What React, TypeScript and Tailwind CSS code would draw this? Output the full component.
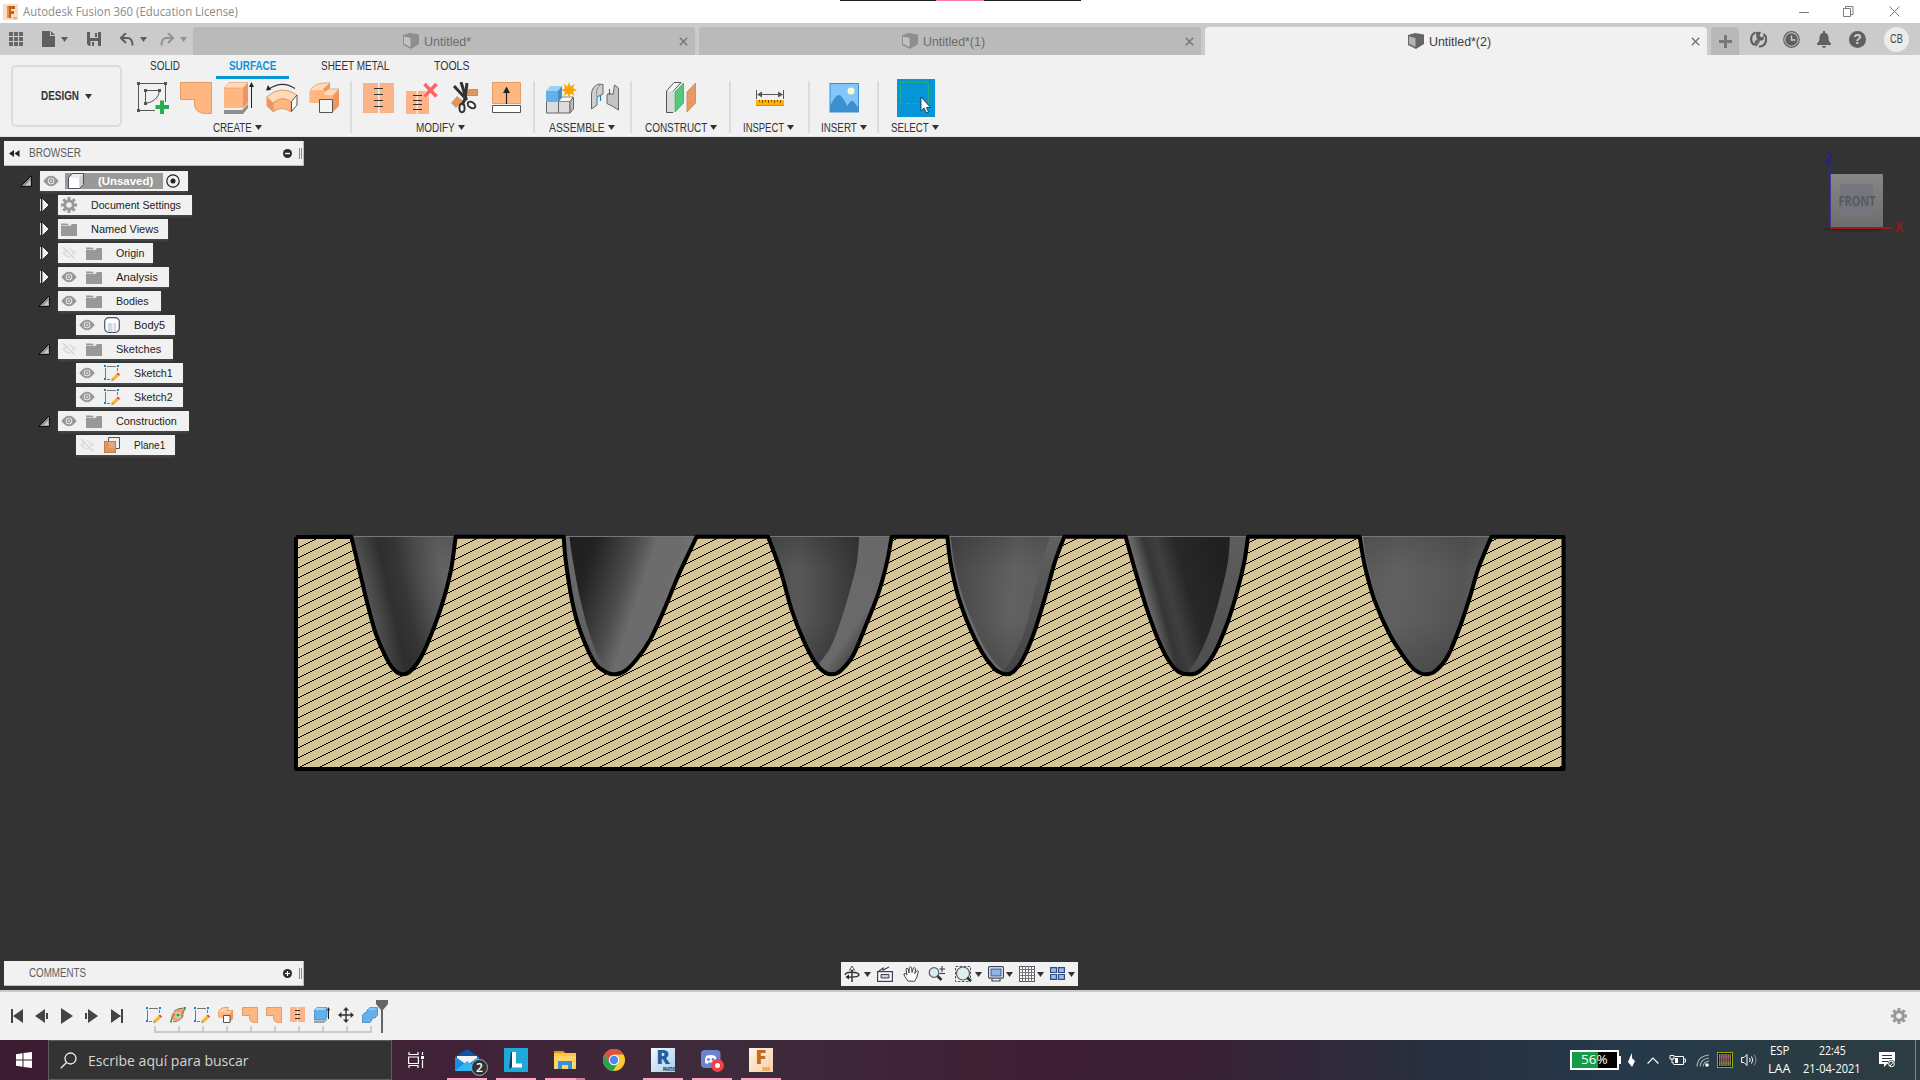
import React, { useLayoutEffect, useRef, useState } from 'react';

type Kids = { children?: React.ReactNode };

/* Single-line text condensed or widened so that it fills the given width. */
function Fit({ w, text, className = '' }: { w: number; text: string; className?: string }) {
  const ref = useRef<HTMLSpanElement>(null);
  const [scale, setScale] = useState(1);
  useLayoutEffect(() => {
    if (ref.current) setScale(w / ref.current.offsetWidth);
  }, [w, text]);
  return (
    <span className={'block shrink-0 ' + className} style={{ width: w }}>
      <span ref={ref} className="inline-block origin-left whitespace-pre" style={{ transform: `scaleX(${scale})` }}>
        {text}
      </span>
    </span>
  );
}

function Svg({ w, h, className = '', children }: { w: number; h: number; className?: string } & Kids) {
  return (
    <svg width={w} height={h} viewBox={`0 0 ${w} ${h}`} fill="none" className={'block shrink-0 ' + className}>
      {children}
    </svg>
  );
}

const Caret = ({ className = '' }: { className?: string }) => (
  <Svg w={7} h={5} className={className}>
    <path d="M0 0H7L3.5 5Z" fill="currentColor" />
  </Svg>
);

/* ---------- title bar ---------- */

function TitleBar() {
  return (
    <div className="relative flex h-[23px] items-center bg-white">
      <Svg w={15} h={16} className="ml-[3px]">
        <rect width="15" height="16" fill="#fbdcc0" />
        <path d="M4 2H12V5H8V7H11V10H8V14H4Z" fill="#b9661c" />
        <path d="M4 2L6 3V14H4Z" fill="#e8964a" />
        <path d="M9 13h5v2h-3z" fill="#f0b27c" />
      </Svg>
      <Fit w={215} text="Autodesk Fusion 360 (Education License)" className="ml-[5px] font-['Open_Sans',sans-serif] text-[12px] text-[#8a8a8a]" />
      <div className="absolute left-[840px] top-0 flex h-px w-[241px] bg-[#1d1d1d]">
        <div className="ml-24 h-px w-12 bg-[#ff7fa5]" />
      </div>
      <div className="ml-auto flex items-center text-[#7d7d7d]">
        <Svg w={10} h={10}><path d="M0 5.5H10" stroke="currentColor" /></Svg>
        <Svg w={11} h={11} className="ml-[34px]"><path d="M.5 2.5H7.5V10.5H.5ZM2.5 2.5V.5H10V8.5H7.5" stroke="currentColor" /></Svg>
        <Svg w={11} h={11} className="ml-[35px] mr-5"><path d="M.5 .5L10.500 10.500M10.500 .5L.5 10.500" stroke="currentColor" /></Svg>
      </div>
    </div>
  );
}

/* ---------- document tab bar ---------- */

const DocCube = ({ dim }: { dim?: boolean }) => (
  <Svg w={16} h={16}>
    <path d="M0 2L7 0L16 1.500V11L8 16L0 12Z" fill={dim ? '#8e8e8e' : '#666'} />
    <path d="M1 3.500L7.500 5V14L1 10.800Z" fill={dim ? '#c2c2c2' : '#b4b4b4'} />
  </Svg>
);

function DocTab({ title, w, active, className }: { title: string; w: number; active?: boolean; className: string }) {
  return (
    <div className={'flex h-7 items-center rounded-t-[4px] ' + (active ? 'bg-[#f1f1f1] text-[#3c3c3c] ' : 'bg-[#bababa] text-[#6c6c6c] ') + className}>
      <DocCube dim={!active} />
      <Fit w={w} text={title} className="ml-[5px] mt-[1px] font-['Liberation_Sans',sans-serif] text-[13px]" />
      <Svg w={9} h={9} className="ml-auto mr-[7px]">
        <path d="M.8 .8L8.200 8.200M8.200 .8L.8 8.200" stroke="#777" strokeWidth="1.500" />
      </Svg>
    </div>
  );
}

function TabBar() {
  return (
    <div className="flex h-8 items-end bg-[#cbcbcb] text-[#5f5f5f]">
      <div className="flex h-8 w-[193px] shrink-0 items-center pl-[9px]">
        <Svg w={14} h={14}>
          {[0, 5, 10].map((x) => [0, 5, 10].map((y) => <rect key={x + '-' + y} x={x} y={y} width="4" height="4" fill="#666" />))}
        </Svg>
        <Svg w={13} h={16} className="ml-[19px]"><path d="M0 0H8V5H13V16H0ZM9 0L13 4H9Z" fill="#5f5f5f" /></Svg>
        <Caret className="ml-[6px]" />
        <Svg w={14} h={14} className="ml-[19px]">
          <path d="M0 0H14V14H2L0 12Z" fill="#5f5f5f" />
          <path d="M3 0H11V6H3ZM3.500 9H11V14H3.500Z" fill="#cbcbcb" />
          <path d="M8 1h2v4H8zM5 10h2v4H5z" fill="#5f5f5f" />
        </Svg>
        <Svg w={14} h={13} className="ml-[19px]">
          <path d="M1.500 5H8Q12.500 5.500 12.500 12.500" stroke="#5f5f5f" strokeWidth="2" />
          <path d="M6 0L1 5L6 10" stroke="#5f5f5f" strokeWidth="2" />
        </Svg>
        <Caret className="ml-[6px]" />
        <Svg w={14} h={13} className="ml-[13px]">
          <path d="M12.500 5H6Q1.500 5.500 1.500 12.500" stroke="#929292" strokeWidth="2" />
          <path d="M8 0L13 5L8 10" stroke="#929292" strokeWidth="2" />
        </Svg>
        <Caret className="ml-[6px] text-[#929292]" />
      </div>
      <DocTab title="Untitled*" w={47} className="w-[502px] pl-[210px]" />
      <DocTab title="Untitled*(1)" w={62} className="ml-1 w-[502px] pl-[203px]" />
      <DocTab title="Untitled*(2)" w={62} active className="ml-1 w-[502px] pl-[203px]" />
      <div className="ml-1 flex h-7 w-7 items-center justify-center rounded-t-[4px] bg-[#b8b8b8]">
        <Svg w={13} h={13}><path d="M6.500 0V13M0 6.500H13" stroke="#777" strokeWidth="3" /></Svg>
      </div>
      <div className="flex h-8 items-center">
        <Svg w={17} h={17} className="ml-[11px]">
          <path d="M5.500 1.500A7 7 0 0 0 4.500 14M13.500 3A7 7 0 0 1 9 15.500" stroke="#5f5f5f" strokeWidth="2.200" />
          <path d="M5 10L7 8L10 10.500L6.500 15.500L4 14Z" fill="#5f5f5f" opacity=".9" />
          <path d="M6 1L11 .8L9.500 5L12 6.500L14 4.500L13.500 9L9 10L6.500 7Z" fill="#5f5f5f" />
        </Svg>
        <Svg w={17} h={17} className="ml-[16px]">
          <circle cx="8.500" cy="8.500" r="7.800" stroke="#5f5f5f" strokeWidth="1.200" />
          <circle cx="8.500" cy="8.500" r="6.200" fill="#5f5f5f" />
          <path d="M8.500 4.500V9H12.500" stroke="#ccc" strokeWidth="1.400" />
        </Svg>
        <Svg w={16} h={17} className="ml-[16px]">
          <path d="M7 0H9V1.800Q12.500 2.800 12.500 7Q12.500 11 15 12.500V14H1V12.500Q3.500 11 3.500 7Q3.500 2.800 7 1.800ZM6 15H10Q9.500 17 8 17Q6.500 17 6 15Z" fill="#5f5f5f" />
        </Svg>
        <div className="ml-[17px] flex h-[17px] w-[17px] items-center justify-center rounded-full bg-[#5f5f5f] font-['Liberation_Sans',sans-serif] text-[14px] font-bold leading-none text-[#d0d0d0]">?</div>
        <div className="ml-[18px] flex h-[25px] w-[25px] items-center justify-center rounded-full bg-[#ececec]">
          <Fit w={13} text="CB" className="font-['Liberation_Sans',sans-serif] text-[12px] text-[#444]" />
        </div>
      </div>
    </div>
  );
}

/* ---------- ribbon icons, each on a 32px grid ---------- */

const O = '#ffb681';
const OS = '#e39c67';

const Ico = ({ children }: Kids) => <Svg w={32} h={32}>{children}</Svg>;

const SketchIcon = () => (
  <Ico>
    <path d="M2 1.500H28M1.500 2V28M28.500 2V20M2 28.500H18" stroke="#555" />
    <path d="M0 0h3v3H0zM27 0h3v3h-3zM0 27h3v3H0zM7 7h3v3H7zM21 7h3v3h-3zM7 20h3v3H7z" fill="#555" />
    <path d="M8.500 9V20M9 8.500H22M22.500 9Q21 19 9 21.500" stroke="#555" />
    <path d="M23 18.500H27V23H32V27H27V32H23V27H18.500V23H23Z" fill="#24b04c" />
  </Ico>
);
const PatchIcon = () => (
  <Ico><path d="M.5 .5H31.500V31.500H25Q15.500 31 14.500 23V17.500H.5Z" fill={O} stroke={OS} /></Ico>
);
const ExtrudeIcon = () => (
  <Ico>
    <path d="M1 28L19 28L25 22V26L20 32H1Z" fill="#8e8e8e" />
    <path d="M1 6H20V26H1Z" fill={O} />
    <path d="M1 6L6 .5H25L20 6Z" fill="#ffd9b8" stroke={OS} strokeWidth=".6" />
    <path d="M20 6L25 .5V21L20 26Z" fill="#ef9560" />
    <path d="M28.500 3V26" stroke="#222" /><path d="M26 5L28.500 0L31 5Z" fill="#222" />
  </Ico>
);
const RevolveIcon = () => (
  <Ico>
    <path d="M3 7Q16 -2 29 6.500" stroke="#333" strokeWidth="1.200" /><path d="M0 8.500L2 3L5 8Z" fill="#222" />
    <path d="M.5 15Q15 2 31 13L25 20Q17 13 7 21Z" fill="#ffd9b8" stroke={OS} />
    <path d="M.5 15L7 21V30L.5 24Z" fill="#ef9560" />
    <path d="M7 21Q17 13 25 20V30Q16 23 7 30Z" fill={O} stroke={OS} />
    <path d="M31 13L25.500 19.500V29.500L31 23Z" fill="#fff" stroke="#555" />
  </Ico>
);
const OffsetIcon = () => (
  <Ico>
    <path d="M1 10Q3 2 14 1H21L17 7H22L30 7L24 14H10Q1 14 1 20Z" fill="#ffd9b8" stroke={OS} strokeWidth=".8" />
    <path d="M21 1V6L16 10L14 7Z" fill="#ef9560" />
    <path d="M1 10Q3 8 8 8H15Q14 14 22 14H24V22H10V21H1Z" fill={O} />
    <path d="M24 14L30 7V24L24 30Z" fill="#ef9560" />
    <path d="M10.500 17.500H23.500V30.500H10.500Z" fill="#f4f4f4" stroke="#555" />
  </Ico>
);
const StitchIcon = () => (
  <Ico>
    <path d="M0 1H15V31H0ZM16.500 1H31V31H16.500Z" fill="#fab487" />
    <path d="M11 6.500H20M11 12.500H20M11 18.500H20M11 24.500H20" stroke="#333" />
  </Ico>
);
const UnstitchIcon = () => (
  <Ico>
    <path d="M0 9H10.500V32H0ZM12 9H23V32H12Z" fill="#fab487" />
    <path d="M7 13.500H16M7 18.500H16M7 22.500H16M7 27.500H16" stroke="#333" />
    <path d="M19 3L30 14M30 3L19 14" stroke="#f1f1f1" strokeWidth="5" />
    <path d="M18.500 2L30.500 14.500M30.500 2L18.500 14.500" stroke="#ff6464" strokeWidth="3.600" />
  </Ico>
);
const TrimIcon = () => (
  <Ico>
    <path d="M19.500 7.500H28.500V13.500H17Z" fill="#e0965f" stroke="#c77c46" strokeWidth=".8" />
    <path d="M2 21L8 14L14 19L7 26Z" fill="#e0965f" />
    <path d="M12 0L17 16M5 4L18 18" stroke="#333" strokeWidth="3" />
    <path d="M18 1L16 17L13 23" stroke="#333" strokeWidth="3" />
    <ellipse cx="13" cy="26" rx="2.600" ry="4.200" stroke="#333" strokeWidth="2" />
    <ellipse cx="22.500" cy="23" rx="4.200" ry="2.800" transform="rotate(35 22.500 23)" stroke="#333" strokeWidth="2" />
  </Ico>
);
const ExtendIcon = () => (
  <Ico>
    <path d="M.5 .5H28.500V21.500H.5Z" fill={O} stroke={OS} />
    <path d="M.5 23.500H28.500V30.500H.5Z" fill="#fff" stroke="#555" />
    <path d="M14.500 9V22" stroke="#222" strokeWidth="1.200" /><path d="M11 11L14.500 4.500L18 11Z" fill="#222" />
  </Ico>
);
const ComponentIcon = () => (
  <Ico>
    <path d="M1.500 19.500H13.500V31H1.500ZM13.500 19.500H25V31H13.500Z" fill="#dcdcdc" stroke="#666" />
    <path d="M13.500 19.500L17 15H28.500L25 19.500Z" fill="#f8f8f8" stroke="#888" /><path d="M25 19.500L28.500 15V27L25 31Z" fill="#bdbdbd" stroke="#666" />
    <path d="M1 9H13V20H1Z" fill="#66b0ea" /><path d="M1 9L5 4H17L13 9Z" fill="#9bd0f7" /><path d="M13 9L17 4V15L13 20Z" fill="#3d8fd0" />
    <path d="M24 0L25.500 4.500L29.500 2L28 6.300L32 8L28 9.700L29.500 14L25.500 11.500L24 16L22.500 11.500L18.500 14L20 9.700L16 8L20 6.300L18.500 2L22.500 4.500Z" fill="#f7a500" />
  </Ico>
);
const JointIcon = () => (
  <Ico>
    <path d="M3.500 27V12Q4 4 11 2L15 2.500V12L9 15V23Z" fill="#cfcfcf" stroke="#666" />
    <path d="M9 15Q7 8 12 3" stroke="#888" />
    <path d="M30.500 6V28L24 24L19 21.500V12.500Q21 10.500 25 12.500L26.500 3Z" fill="#c4c4c4" stroke="#666" />
    <path d="M12.500 13V19M21.500 7V13" stroke="#0a84d8" strokeWidth="1.200" />
  </Ico>
);
const ConstructIcon = () => (
  <Ico>
    <path d="M1.500 9V30.500H8V9.500L16 .5H9Z" fill="#f6f6f6" stroke="#555" />
    <path d="M2 9.500H9V30H2Z" fill="#d9d9d9" />
    <path d="M10 10L18.500 1V21L10 30Z" fill="#58c67c" stroke="#3aa65e" strokeWidth=".8" />
    <path d="M22 10L30.500 1V21L22 30Z" fill="#e89a64" stroke="#cc8350" strokeWidth=".8" />
  </Ico>
);
const InspectIcon = () => (
  <Ico>
    <path d="M2.500 8V17M29.500 8V17M5 12.500H27" stroke="#555" />
    <path d="M3 12.500L8 9.500V15.500ZM29 12.500L24 9.500V15.500Z" fill="#555" />
    <rect x="2" y="18" width="28" height="6" fill="#ffb000" /><path d="M2 23.500H30" stroke="#e08e00" />
    <path d="M5.500 18v2M8.500 18v3M11.500 18v2M14.500 18v3M17.500 18v2M20.500 18v3M23.500 18v2M26.500 18v3" stroke="#7a5200" />
  </Ico>
);
const InsertIcon = () => (
  <Ico>
    <rect x="2" y="1.500" width="28.500" height="28.500" fill="#82c6fa" />
    <circle cx="23" cy="9" r="3.500" fill="#fff9cf" />
    <path d="M2 24Q8 12 11 13Q15 14 19 24L22 20Q24 18 26 20L30.500 26V30H2Z" fill="#3d90cf" />
    <rect x="2" y="1.500" width="28.500" height="28.500" stroke="#3d90cf" />
  </Ico>
);

function Group({ label, w, className, labelClass = 'pr-[2px]', last, children }: { label: string; w: number; className: string; labelClass?: string; last?: boolean } & Kids) {
  return (
    <div className={'flex h-[52px] flex-col items-center ' + (last ? '' : 'border-r-2 border-[#dcdcdc] ') + className}>
      <div className="flex h-8 gap-[11px] pt-px">{children}</div>
      <div className={'mt-[6px] flex h-[16px] items-center text-[#333] ' + labelClass}>
        <Fit w={w} text={label} className="mt-px text-[12px]" />
        <Caret className="ml-[3px]" />
      </div>
    </div>
  );
}

function Ribbon() {
  return (
    <div className="flex h-[82px] border-b border-[#dfe3e3] bg-[#f1f1f1] font-['Liberation_Sans',sans-serif]">
      <div className="ml-[11px] mt-[10px] flex h-[62px] w-[111px] items-center justify-center rounded-[5px] border-2 border-[#dcdcdc] text-[#333]">
        <Fit w={38} text="DESIGN" className="text-[12px] font-bold" />
        <Caret className="ml-[6px]" />
      </div>
      <div className="ml-[5px] flex flex-col">
        <div className="flex h-6 items-start pt-[2px] text-[12px] text-[#333]">
          <Fit w={30} text="SOLID" className="ml-[23px]" />
          <div className="ml-9 flex h-[22px] w-[73px] flex-col items-center border-b-[3px] border-[#0696d7]">
            <Fit w={47} text="SURFACE" className="font-bold text-[#0696d7]" />
          </div>
          <Fit w={68} text="SHEET METAL" className="ml-8" />
          <Fit w={35} text="TOOLS" className="ml-[45px]" />
        </div>
        <div className="mt-[2px] flex">
          <Group label="CREATE" w={39} className="w-[225px]"><SketchIcon /><PatchIcon /><ExtrudeIcon /><RevolveIcon /><OffsetIcon /></Group>
          <Group label="MODIFY" w={39} className="w-[183px] pl-[2px]" labelClass="pr-[6px]"><StitchIcon /><UnstitchIcon /><TrimIcon /><ExtendIcon /></Group>
          <Group label="ASSEMBLE" w={56} className="w-[97px]"><ComponentIcon /><JointIcon /></Group>
          <Group label="CONSTRUCT" w={62} className="w-[99px]" labelClass=""><ConstructIcon /></Group>
          <Group label="INSPECT" w={41} className="w-[79px]"><InspectIcon /></Group>
          <Group label="INSERT" w={36} className="w-[69px]" labelClass="pl-[1px]"><InsertIcon /></Group>
          <Group label="SELECT" w={38} className="w-[76px] pr-[2px]" last>
            <Svg w={38} h={38} className="-mt-[3px]">
              <rect width="38" height="38" fill="#0696d7" />
              <rect x="3.500" y="3.500" width="28" height="21" stroke="#2fb457" strokeDasharray="5 2.500" />
              <path d="M24 18V32L27 29L29.500 34L31.500 33L29.500 28.500H33.500Z" fill="#fff" stroke="#222" strokeWidth=".8" />
            </Svg>
          </Group>
        </div>
      </div>
    </div>
  );
}

/* ---------- browser tree ---------- */

const Eye = ({ off }: { off?: boolean }) => (
  <Svg w={16} h={16}>
    {off ? (
      <>
        <path d="M1 8Q8 -1 15 8Q8 17 1 8Z" fill="#dedede" /><circle cx="8" cy="8" r="3" fill="#f1f1f1" />
        <path d="M3 1L14 14" stroke="#f1f1f1" strokeWidth="3" /><path d="M2 2L14 14" stroke="#d4d4d4" strokeWidth="1.200" />
      </>
    ) : (
      <>
        <path d="M.3 8Q8 -2.500 15.700 8Q8 18.500 .3 8Z" fill="#999" /><circle cx="8" cy="8" r="3.200" fill="#f1f1f1" />
        <circle cx="8" cy="8" r="2.400" fill="#999" /><circle cx="8" cy="8" r=".9" fill="#e8e8e8" />
      </>
    )}
  </Svg>
);
const Gear = () => (
  <Svg w={16} h={16}>
    <g stroke="#999" strokeWidth="3"><path d="M8 0V4M8 12V16M0 8H4M12 8H16" /><path d="M2.300 2.300L5 5M11 11L13.700 13.700M2.300 13.700L5 11M11 5L13.700 2.300" /></g>
    <circle cx="8" cy="8" r="4.300" stroke="#999" strokeWidth="3" />
  </Svg>
);
const Folder = () => (
  <Svg w={16} h={16}>
    <path d="M0 5H9L11 3H16V15H0Z" fill="#999" /><path d="M0 2.500H6L8 4H0Z" fill="#999" /><path d="M0 4.500H8" stroke="#ccc" />
  </Svg>
);
const SketchSmall = () => (
  <Svg w={16} h={16}>
    <path d="M3 1.500H12M1.500 3V13M3 14.500H6M13.500 3V6" stroke="#777" />
    <path d="M0 0h2v2H0zM13 0h2v2h-2zM0 13h2v2H0z" fill="#0a84d8" />
    <path d="M7.500 13.500L12.500 8.500L15 11L10 15.500Z" fill="#fbb62f" /><path d="M12.500 8.500L14 7.500L16 9.500L15 11Z" fill="#f0444b" /><path d="M7.500 13.500L10 15.500L7.500 16Z" fill="#888" />
  </Svg>
);
const BodyIcon = () => (
  <Svg w={16} h={16}>
    <rect x=".7" y=".7" width="14.600" height="14.600" rx="4" fill="#fff" stroke="#4a5568" strokeWidth="1.200" />
    <path d="M4 6H12V14.500H4Z" fill="#d3d9e0" /><path d="M8 6H10V14.500H8Z" fill="#edf0f3" />
  </Svg>
);
const PlaneIcon = () => (
  <Svg w={16} h={16}><path d="M4.500 11V.5H15.500V11.500H12" stroke="#555" /><rect x=".5" y="4.500" width="11" height="11" fill="#e39560" stroke="#c67c46" /><path d="M5 5H11V11H5Z" fill="#dba984" /></Svg>
);

const Twist = ({ open }: { open?: boolean }) =>
  open ? (
    <Svg w={12} h={12} className="-ml-px"><path d="M.5 11.500L11.500 .5V11.500Z" fill="#8c8c8c" stroke="#0e0e0e" /><path d="M5 10.500L10.500 5V10.500Z" fill="#c8c8c8" /></Svg>
  ) : (
    <Svg w={12} h={14}><path d="M1.500 1V13" stroke="#ddd" /><path d="M3 0L10 7L3 14Z" fill="#f4f4f4" stroke="#1b1b1b" strokeWidth=".8" /></Svg>
  );

type Node = { at: string; twist?: 'open' | 'closed'; eye?: 'on' | 'off'; icon: React.ReactNode; label: string; tw: number };
const tree: Node[] = [
  { at: 'ml-[39px] w-[153px]', twist: 'closed', icon: <Gear />, label: 'Document Settings', tw: 90 },
  { at: 'ml-[39px] w-[129px]', twist: 'closed', icon: <Folder />, label: 'Named Views', tw: 68 },
  { at: 'ml-[39px] w-[114px]', twist: 'closed', eye: 'off', icon: <Folder />, label: 'Origin', tw: 28 },
  { at: 'ml-[39px] w-[130px]', twist: 'closed', eye: 'on', icon: <Folder />, label: 'Analysis', tw: 42 },
  { at: 'ml-[39px] w-[122px]', twist: 'open', eye: 'on', icon: <Folder />, label: 'Bodies', tw: 33 },
  { at: 'ml-[57px] w-[118px]', eye: 'on', icon: <BodyIcon />, label: 'Body5', tw: 31 },
  { at: 'ml-[39px] w-[134px]', twist: 'open', eye: 'off', icon: <Folder />, label: 'Sketches', tw: 45 },
  { at: 'ml-[57px] w-[126px]', eye: 'on', icon: <SketchSmall />, label: 'Sketch1', tw: 39 },
  { at: 'ml-[57px] w-[126px]', eye: 'on', icon: <SketchSmall />, label: 'Sketch2', tw: 39 },
  { at: 'ml-[39px] w-[150px]', twist: 'open', eye: 'on', icon: <Folder />, label: 'Construction', tw: 61 },
  { at: 'ml-[57px] w-[118px]', eye: 'off', icon: <PlaneIcon />, label: 'Plane1', tw: 31 },
];

const Handle = () => <div className="mr-[1px] h-[11px] w-[3px] border-x border-[#888]" />;

function Browser() {
  return (
    <div className="absolute left-0 top-1 font-['Liberation_Sans',sans-serif]">
      <div className="ml-1 flex h-[25px] w-[300px] items-center border-b border-r border-[#bbb] bg-[#f1f1f1]">
        <Svg w={11} h={7} className="ml-[5px]"><path d="M5 0V7L0 3.500ZM10.500 0V7L5.500 3.500Z" fill="#222" /></Svg>
        <Fit w={52} text="BROWSER" className="ml-[9px] text-[12px] text-[#5e5e5e]" />
        <Svg w={9} h={9} className="ml-auto mr-[7px]"><circle cx="4.500" cy="4.500" r="4.500" fill="#2b2b2b" /><path d="M2 4.500H7" stroke="#fff" strokeWidth="1.400" /></Svg>
        <Handle />
      </div>
      <div className="mt-[3px] flex h-6 items-center">
        <div className="ml-[21px] w-[19px]"><Twist open /></div>
        <div className="flex h-5 w-[148px] items-center bg-[#f1f1f1] shadow-[0_2px_2px_#484848]">
          <div className="ml-[3px]"><Eye /></div>
          <div className="ml-[6px] flex h-4 w-[98px] items-center bg-[#999]">
            <Svg w={16} h={16} className="ml-[3px]">
              <path d="M.5 4.500L4.500 .5H15.500V11.500L11.500 15.500H.5Z" fill="#e8ebef" stroke="#4a4f58" />
              <path d="M1 5H11V15H1Z" fill="#fff" /><path d="M11.500 5L15 1V11L11.500 15Z" fill="#c9ced5" />
            </Svg>
            <Fit w={55} text="(Unsaved)" className="ml-[14px] text-[11px] font-bold text-white" />
          </div>
          <Svg w={14} h={14} className="ml-[3px]"><circle cx="7" cy="7" r="6.200" stroke="#222" strokeWidth="1.200" /><circle cx="7" cy="7" r="2.500" fill="#222" /></Svg>
        </div>
      </div>
      {tree.map((n) => (
        <div key={n.label} className="flex h-6 items-center">
          <NodeBox n={n} />
        </div>
      ))}
    </div>
  );
}

function NodeBox({ n }: { n: Node }) {
  return (
    <div className={'flex h-5 items-center ' + n.at}>
      <div className="w-[19px] shrink-0">{n.twist && <Twist open={n.twist === 'open'} />}</div>
      <div className="flex h-5 flex-1 items-center bg-[#f1f1f1] pl-[3px] shadow-[0_2px_2px_#484848]">
        {n.eye && <div className="mr-[9px]"><Eye off={n.eye === 'off'} /></div>}
        {n.icon}
        <Fit w={n.tw} text={n.label} className="ml-[14px] text-[11px] text-[#1c1c1c]" />
      </div>
    </div>
  );
}

/* ---------- section view ---------- */

type P = [number, number];
const curve = (pts: P[]) => {
  let d = `M${pts[0][0]} ${pts[0][1]}`;
  for (let i = 0; i < pts.length - 1; i++) {
    const a = pts[Math.max(0, i - 1)], b = pts[i], c = pts[i + 1], e = pts[Math.min(pts.length - 1, i + 2)];
    d += `C${b[0] + (c[0] - a[0]) / 6} ${b[1] + (c[1] - a[1]) / 6} ${c[0] - (e[0] - b[0]) / 6} ${c[1] - (e[1] - b[1]) / 6} ${c[0]} ${c[1]}`;
  }
  return d;
};
const at = (ox: number, pts: P[]): P[] => pts.map(([x, y]) => [ox + x / 3, 520 + y / 3]);

/* tilt: vertical component of the shading direction; shade: strength of the top and bottom darkening */
const cavities: { pts: P[]; tilt: number; shade: number; stops: [number, string][] }[] = [
  {
    pts: at(280, [[214, 50], [238, 150], [262, 250], [287, 340], [318, 412], [343, 450], [370, 463], [395, 450], [425, 408], [455, 340], [487, 250], [513, 150], [527, 50]]),
    tilt: -0.3, shade: 0.5,
    stops: [[0, '#585858'], [0.08, '#4a4a4a'], [0.22, '#303030'], [0.36, '#363636'], [0.55, '#505050'], [0.75, '#646464'], [1, '#5c5c5c']],
  },
  {
    pts: at(280, [[851, 50], [857, 120], [872, 220], [890, 300], [915, 370], [945, 430], [975, 455], [1005, 463], [1035, 453], [1070, 418], [1110, 360], [1150, 275], [1200, 155], [1250, 50]]),
    tilt: 0.35, shade: 0,
    stops: [[0, '#1e1e1e'], [0.22, '#222'], [0.36, '#363636'], [0.5, '#4c4c4c'], [0.64, '#6c6c6c'], [0.8, '#6c6c6c'], [1, '#777']],
  },
  {
    pts: at(720, [[144, 50], [181, 150], [215, 270], [250, 360], [285, 427], [310, 454], [335, 463], [362, 452], [400, 405], [440, 310], [475, 220], [500, 130], [515, 50]]),
    tilt: 0, shade: 0.9,
    stops: [[0, '#505050'], [0.25, '#585858'], [0.45, '#4a4a4a'], [0.7, '#373737'], [1, '#333']],
  },
  {
    pts: at(720, [[682, 50], [692, 130], [715, 230], [750, 325], [785, 395], [820, 443], [840, 457], [858, 463], [880, 455], [910, 415], [945, 330], [980, 215], [1005, 125], [1033, 50]]),
    tilt: 0.1, shade: 0.7,
    stops: [[0, '#444'], [0.3, '#525252'], [0.6, '#626262'], [0.85, '#5c5c5c'], [1, '#666']],
  },
  {
    pts: at(1130, [[-13, 50], [15, 150], [50, 265], [85, 360], [115, 420], [145, 455], [175, 463], [207, 455], [250, 405], [290, 315], [320, 220], [343, 125], [354, 50]]),
    tilt: -0.3, shade: 0.2,
    stops: [[0, '#777'], [0.06, '#5a5a5a'], [0.13, '#363636'], [0.22, '#404040'], [0.36, '#282828'], [0.7, '#202020'], [1, '#242424']],
  },
  {
    pts: at(1130, [[689, 50], [705, 140], [735, 245], [780, 345], [825, 415], [855, 450], [888, 463], [920, 450], [955, 405], [990, 320], [1020, 230], [1045, 145], [1084, 50]]),
    tilt: 0.1, shade: 0.6,
    stops: [[0, '#585858'], [0.3, '#616161'], [0.6, '#5a5a5a'], [0.8, '#545454'], [1, '#606060']],
  },
];

const slivers: { i: number; d: string; from: string; to: string }[] = [
  { i: 1, d: curve(at(280, [[868, 50], [880, 130], [900, 235], [925, 330], [955, 410], [985, 455]])) + 'L560 680V530Z', from: '#6e6e6e', to: '#5a5a5a' },
  { i: 2, d: curve(at(720, [[418, 50], [410, 130], [390, 210], [360, 310], [330, 385], [298, 430]])) + 'L830 690L900 690V530Z', from: '#686868', to: '#6a6a6a' },
  { i: 3, d: curve(at(720, [[990, 50], [965, 130], [940, 230], [915, 330], [880, 410], [850, 452]])) + 'L1010 690L1070 690V530Z', from: '#626262', to: '#404040' },
  { i: 3, d: curve(at(720, [[692, 50], [705, 140], [735, 250], [775, 345], [815, 415], [852, 456]])) + 'L940 690V530Z', from: '#6a6a6a', to: '#6a6a6a' },
  { i: 4, d: curve(at(1130, [[300, 50], [293, 130], [270, 230], [240, 330], [205, 410], [178, 450]])) + 'L1190 690L1260 690V530Z', from: '#5e5e5e', to: '#4c4c4c' },
  { i: 5, d: curve(at(1130, [[700, 50], [714, 140], [745, 245], [788, 345], [830, 413], [860, 450]])) + 'L1350 690V530Z', from: '#6e6e6e', to: '#585858' },
];

function SectionView() {
  const outline =
    'M296 769V537L' + cavities.map((c) => curve(c.pts).slice(1)).join('L') + 'L1563.500 537V769Z';
  return (
    <svg width="1920" height="853" viewBox="0 137 1920 853" fill="none" className="block">
      <defs>
        <pattern id="hatch" x="14" y="0" width="20" height="10" patternUnits="userSpaceOnUse">
          <rect width="20" height="10" fill="#d5c596" />
          {[0, 1, 2, 3, 4, 5, 6, 7, 8, 9].map((i) => (
            <rect key={i} x={2 * i} y={9 - i} width="2" height="1" fill="#000" shapeRendering="crispEdges" />
          ))}
        </pattern>
        <linearGradient id="depth" x1="0" y1="0" x2="0" y2="1">
          <stop offset="0" stopColor="#222" stopOpacity=".3" /><stop offset=".25" stopColor="#222" stopOpacity="0" />
          <stop offset=".6" stopColor="#222" stopOpacity="0" /><stop offset="1" stopColor="#222" stopOpacity=".45" />
        </linearGradient>
        <linearGradient id="edge" gradientUnits="userSpaceOnUse" x1="845" y1="640" x2="862" y2="652">
          <stop offset="0" stopColor="#2a2a2a" stopOpacity="0" /><stop offset="1" stopColor="#2a2a2a" stopOpacity=".7" />
        </linearGradient>
        {cavities.map((c, i) => (
          <React.Fragment key={i}>
            <linearGradient id={'g' + i} x1="0" x2="1" y1="0" y2={c.tilt}>
              {c.stops.map(([o, col]) => <stop key={o} offset={o} stopColor={col} />)}
            </linearGradient>
            <clipPath id={'c' + i}><path d={curve(c.pts) + 'Z'} /></clipPath>
          </React.Fragment>
        ))}
        {slivers.map((s, i) => (
          <linearGradient key={i} id={'s' + i} x1="0" x2="0" y1="0" y2="1">
            <stop offset="0" stopColor={s.from} /><stop offset="1" stopColor={s.to} />
          </linearGradient>
        ))}
      </defs>
      <path d={outline} fill="url(#hatch)" />
      {cavities.map((c, i) => (
        <g key={i}>
          <path d={curve(c.pts) + 'Z'} fill={`url(#g${i})`} />
          <path d={curve(c.pts) + 'Z'} fill="url(#depth)" fillOpacity={c.shade} />
          {slivers.map((s, k) => s.i === i && <path key={k} d={s.d} fill={`url(#s${k})`} clipPath={`url(#c${i})`} />)}
          {i === 2 && <path d={slivers[1].d} fill="url(#edge)" clipPath="url(#c2)" />}
          <path d={`M${c.pts[0][0]} 536.500H${c.pts[c.pts.length - 1][0]}`} stroke="#777" />
        </g>
      ))}
      <path d={outline.replace(/Z$/, '')} stroke="none" />
      <path
        d={'M296 537L' + cavities.map((c) => curve(c.pts).slice(1)).join('M').replace(/M([\d.]+) ([\d.]+)C/g, 'L$1 $2C').replace(/^/, '') + 'L1563.500 537V769H296V537'}
        stroke="#000"
        strokeWidth="4"
        strokeLinejoin="round"
      />
    </svg>
  );
}

function ViewCube() {
  return (
    <div className="absolute left-[1820px] top-[12px] font-['Open_Sans',sans-serif]">
      <Svg w={90} h={88}>
        <defs>
          <linearGradient id="cube" x1="0" x2="0" y1="0" y2="1"><stop offset="0" stopColor="#868686" /><stop offset="1" stopColor="#6e6e6e" /></linearGradient>
        </defs>
        <ellipse cx="34" cy="80" rx="32" ry="2.500" fill="#222" opacity=".6" />
        <rect x="10" y="25" width="53" height="53" rx="1" fill="url(#cube)" />
        <rect x="20" y="35" width="33" height="33" fill="#74767b" />
        <path d="M10 17V79" stroke="#2a2a98" strokeWidth="1.600" />
        <path d="M10 79H72" stroke="#a01818" strokeWidth="1.800" />
        <text x="18.500" y="57" fontSize="14.500" fontWeight="700" fill="#565b64" textLength="37" lengthAdjust="spacingAndGlyphs">FRONT</text>
        <text x="5" y="14" fontSize="14.500" fontWeight="700" fill="#22228c" textLength="8" lengthAdjust="spacingAndGlyphs">Z</text>
        <text x="75" y="83" fontSize="14" fontWeight="700" fill="#8e1a1a" textLength="8" lengthAdjust="spacingAndGlyphs">X</text>
      </Svg>
    </div>
  );
}

function NavBar() {
  const c = 'text-[#333]';
  return (
    <div className="absolute bottom-1 left-[841px] flex h-6 w-[237px] items-center bg-[#f1f1f1] pl-[3px]">
      <Svg w={16} h={16}>
        <path d="M8 1V16" stroke="#333" strokeWidth="1.500" /><path d="M5.500 4L8 0L10.500 4Z" fill="#fff" stroke="#333" strokeWidth=".8" />
        <path d="M1 9Q2 6 8 6.300Q15 6.500 15 9Q14 11.500 4 11" stroke="#333" strokeWidth="1.400" /><path d="M5 8.500V13.500L1.500 11Z" fill="#222" />
      </Svg>
      <Caret className={'ml-[4px] ' + c} />
      <Svg w={16} h={16} className="ml-[6px]">
        <path d="M.6 5.600H15.400V15.400H.6Z" fill="#fff" stroke="#3c4350" strokeWidth="1.200" /><path d="M2 5L6 2V4L12 1" stroke="#3c4350" strokeWidth="1.100" />
        <path d="M4 8.500H12V12H4Z" fill="#c9ced4" stroke="#3c4350" />
      </Svg>
      <Svg w={17} h={16} className="ml-[10px]">
        <path d="M5 15Q1 10 .8 8Q2 6.500 4 9L3 3Q4 1.500 5.200 3L6 7L6.300 1.500Q7.500 0 8.600 1.500L9 6.500L10.500 2Q12 1 12.600 2.600L11.800 7.500L13.500 5Q15 4 15.300 5.500Q14 13 11.500 15.300Z" fill="#fff" stroke="#3c4350" />
      </Svg>
      <Svg w={18} h={16} className="ml-[8px]">
        <circle cx="6" cy="6.500" r="4.800" fill="#d9ecee" stroke="#555f6a" strokeWidth="1.200" /><path d="M9.500 10L13.500 14" stroke="#333" strokeWidth="2.600" /><path d="M14 0V6M11.500 3H17M11.500 7.500H17" stroke="#333" />
      </Svg>
      <Svg w={17} h={16} className="ml-[9px]">
        <rect x=".5" y=".5" width="15" height="15" stroke="#555" strokeDasharray="2.500 1.500" /><circle cx="8" cy="7.500" r="6.500" fill="#dfeff0" stroke="#555f6a" strokeWidth="1.200" /><path d="M12 11.500L16 15" stroke="#333" strokeWidth="2.600" />
      </Svg>
      <Caret className={'ml-[3px] ' + c} />
      <Svg w={16} h={16} className="ml-[6px]">
        <rect x=".6" y=".6" width="14.800" height="11.500" rx="1" fill="#fff" stroke="#3c4350" strokeWidth="1.200" /><rect x="3" y="3" width="10" height="7" fill="#8fb5e4" stroke="#2f528c" /><path d="M4 13V15H12V13" stroke="#3c4350" strokeWidth="1.200" />
      </Svg>
      <Caret className={'ml-[2px] ' + c} />
      <Svg w={16} h={16} className="ml-[6px]">
        <rect x=".5" y=".5" width="15" height="15" fill="#fff" stroke="#555" /><path d="M3.500 0V16M6.500 0V16M9.500 0V16M12.500 0V16M0 3.500H16M0 6.500H16M0 9.500H16M0 12.500H16" stroke="#6d7480" />
      </Svg>
      <Caret className={'ml-[2px] ' + c} />
      <Svg w={15} h={14} className="ml-[6px]">
        <path d="M.6 .6H6.500V5.500H.6ZM8.500 .6H14.400V5.500H8.500ZM.6 7.500H6.500V12.400H.6ZM8.500 7.500H14.400V12.400H8.500Z" fill="#9bbce6" stroke="#2f4a80" strokeWidth="1.200" />
      </Svg>
      <Caret className={'ml-[3px] ' + c} />
    </div>
  );
}

function Comments() {
  return (
    <div className="absolute bottom-1 left-1 flex h-[25px] w-[300px] items-center border-b border-r border-[#bbb] bg-[#f1f1f1] font-['Liberation_Sans',sans-serif]">
      <Fit w={57} text="COMMENTS" className="ml-[25px] text-[12px] text-[#5e5e5e]" />
      <Svg w={9} h={9} className="ml-auto mr-[7px]"><circle cx="4.500" cy="4.500" r="4.500" fill="#2b2b2b" /><path d="M2 4.500H7M4.500 2V7" stroke="#fff" strokeWidth="1.200" /></Svg>
      <Handle />
    </div>
  );
}

/* ---------- timeline ---------- */

const Scaled = ({ children }: Kids) => (
  <svg width="16" height="16" viewBox="0 0 32 32" fill="none" className="block">{children}</svg>
);

const features: React.ReactNode[] = [
  <SketchSmall />,
  <Svg w={16} h={16}><path d="M2 6L10 1L15 2L13 10L6 14L1 13Z" fill="#e8a274" /><path d="M1 14Q3 5 6 8Q9 13 15 2M4 4Q8 1 14 1M3 15Q12 14 13 8" stroke="#7a6250" strokeWidth=".9" /><path d="M5.500 5.500h5v5h-5z" fill="#f6e6da" /><path d="M0 13.500h2v2H0zM14 0h2v2h-2zM6.500 6.500h3v3h-3z" fill="#24a548" /></Svg>,
  <SketchSmall />,
  <Scaled><path d="M1 10Q3 2 14 1H21L17 7H30L24 14H10Q1 14 1 20Z" fill="#ffd0a8" stroke={OS} strokeWidth="2" /><path d="M1 10H15L22 14H24V22H1Z" fill={O} /><path d="M24 14L30 7V24L24 30Z" fill="#ef9560" /><path d="M11 17H24V31H11Z" fill="#fff" stroke="#555" strokeWidth="2" /></Scaled>,
  <Scaled><path d="M1 1H31V31H25Q16 31 15 23V17H1Z" fill={O} stroke={OS} strokeWidth="2" /></Scaled>,
  <Scaled><path d="M1 1H31V31H25Q16 31 15 23V17H1Z" fill={O} stroke={OS} strokeWidth="2" /></Scaled>,
  <Svg w={16} h={16}><path d="M0 0H7V15H0ZM8 0H15V15H8Z" fill="#fab487" /><path d="M5 3.500H10M5 7.500H10M5 11.500H10" stroke="#333" /></Svg>,
  <Svg w={16} h={16}><path d="M0 14H10L13 11V13L10 16H0Z" fill="#a0a0a0" /><path d="M.5 3L3 .5H13V10L10.500 13H.5Z" fill="#66b0ea" stroke="#3a85c4" strokeWidth=".8" /><path d="M1 3L3 .8H12.500L10 3Z" fill="#a8d6f8" /><path d="M14.500 2V12" stroke="#222" /><path d="M13 3.500L14.500 0L16 3.500Z" fill="#222" /></Svg>,
  <Svg w={16} h={16}><path d="M8 2V14M2 8H14" stroke="#333" strokeWidth="1.400" /><path d="M8 0L11 3.500H5ZM8 16L11 12.500H5ZM0 8L3.500 5V11ZM16 8L12.500 5V11Z" fill="#333" /></Svg>,
  <Svg w={16} h={16}><path d="M.5 8L3 5.500H5V3L8 .5H15.500V8L13 11H10V13L8 15.500H.5Z" fill="#66b0ea" stroke="#3a85c4" strokeWidth=".8" /><path d="M5 3L8 .8H15L13 3Z" fill="#8ac5f2" /></Svg>,
];

function Timeline() {
  return (
    <div className="flex h-[50px] items-center border-t-2 border-[#c9c9c9] bg-[#f1f1f1] text-[#444]">
      <Svg w={12} h={14} className="ml-[11px]"><path d="M0 0H2V14H0ZM12 0V14L2 7Z" fill="currentColor" /></Svg>
      <Svg w={13} h={14} className="ml-[12px]"><path d="M10 0V14L0 7ZM11 4H13V10H11Z" fill="currentColor" /></Svg>
      <Svg w={12} h={16} className="ml-[13px]"><path d="M0 0L12 8L0 16Z" fill="currentColor" /></Svg>
      <Svg w={13} h={14} className="ml-[12px]"><path d="M3 0V14L13 7ZM0 4H2V10H0Z" fill="currentColor" /></Svg>
      <Svg w={12} h={14} className="ml-[13px]"><path d="M10 0H12V14H10ZM0 0V14L10 7Z" fill="currentColor" /></Svg>
      <div className="ml-[23px] flex h-12 w-[232px] flex-col pt-[15px]">
        <div className="flex gap-2">{features.map((f, i) => <div key={i}>{f}</div>)}</div>
        <div className="ml-2 mt-[3px] flex h-[7px] w-[218px] justify-between border-b-2 border-[#cbcbcb]">
          {features.map((_, i) => <div key={i} className="h-[7px] w-[2px] bg-[#cbcbcb]" />)}
        </div>
      </div>
      <Svg w={12} h={33} className="-ml-[2px]"><path d="M0 0H12V4L7 10V33H5V10L0 4Z" fill="#666" /></Svg>
      <div className="ml-auto mr-[13px]"><Gear /></div>
    </div>
  );
}

/* ---------- taskbar ---------- */

function TaskButton({ bar = true, children }: { bar?: boolean } & Kids) {
  return (
    <div className={'mr-[9px] flex h-10 w-10 items-center justify-center border-b-2 pt-[2px] ' + (bar ? 'border-[#ffa6c3]' : 'border-transparent')}>
      {children}
    </div>
  );
}

function Taskbar() {
  return (
    <div className="flex h-10 items-center bg-[linear-gradient(90deg,#3a1b30_0%,#402338_25%,#3d2c3c_38%,#3e1f33_52%,#3a2034_62%,#27303f_75%,#26394a_85%,#2b3d42_95%,#2c3c42_100%)] font-['Open_Sans',sans-serif] text-white">
      <Svg w={16} h={16} className="ml-4"><path d="M0 2.200L6.500 1.300V7.500H0ZM7.500 1.100L16 0V7.500H7.500ZM0 8.500H6.500V14.700L0 13.800ZM7.500 8.500H16V16L7.500 14.900Z" fill="#fff" /></Svg>
      <div className="ml-4 flex h-10 w-[344px] items-center border border-[#5c5c5c] bg-[#333]">
        <Svg w={17} h={17} className="ml-[11px]"><circle cx="10.500" cy="6.500" r="5.500" stroke="#eee" strokeWidth="1.300" /><path d="M6.500 10.500L.8 16.200" stroke="#eee" strokeWidth="1.300" /></Svg>
        <Fit w={161} text="Escribe aquí para buscar" className="ml-[11px] mt-px text-[15px] text-[#d5d5d5]" />
      </div>
      <Svg w={17} h={16} className="ml-4"><path d="M1 0V2.500H10V0M1 16V13.500H10V16M.6 5H10.400V11.500H.6ZM14.500 0V3M14.500 8V16" stroke="#fff" strokeWidth="1.200" /><rect x="13" y="4" width="3" height="3" fill="#fff" /></Svg>
      <div className="ml-[22px] flex">
        <TaskButton>
          <div className="relative">
            <Svg w={24} h={24}><path d="M0 9L12 1L24 9V12H0Z" fill="#0a56a6" /><path d="M2 8H22V18H2Z" fill="#f3f3f3" /><path d="M0 8.500L12 17L24 8.500V23H0Z" fill="#1b8fe0" /><path d="M0 23L12 13L24 23Z" fill="#35b3f5" /></Svg>
            <div className="absolute left-[16px] top-[11px] flex h-[17px] w-[17px] items-center justify-center rounded-full border border-[#aaa] bg-[#333] text-[12px] font-semibold leading-none">2</div>
          </div>
        </TaskButton>
        <TaskButton>
          <div className="flex h-6 w-6 items-center justify-center bg-[#1fa8d8]">
            <Svg w={24} h={24}><path d="M8 4V19L5 21L7 4Z" fill="#0b3d63" /><path d="M8 4H12V15.500H18V19.500H8Z" fill="#fff" /></Svg>
          </div>
        </TaskButton>
        <div className="relative">
          <TaskButton>
            <Svg w={22} h={20}><path d="M0 1H9L11 3H22V19H0Z" fill="#f7c744" /><path d="M0 1H9L11 3H0Z" fill="#d99a1c" /><path d="M0 6H22V19H0Z" fill="#fdd465" /><path d="M4 11H18V19H14V15H8V19H4Z" fill="#3b8fd6" /></Svg>
          </TaskButton>
          <div className="absolute bottom-0 left-[31px] h-[2px] w-[9px] bg-[#c67f9b]" />
        </div>
        <TaskButton bar={false}>
          <Svg w={22} h={22}>
            <circle cx="11" cy="11" r="11" fill="#fcc934" />
            <path d="M11 0A11 11 0 0 0 1.470 5.500L6.500 13.500L11 5.500H20.500A11 11 0 0 0 11 0Z" fill="#dc5044" />
            <path d="M1.470 5.500A11 11 0 0 0 10 22L15 13.500H6.500Z" fill="#2ba24c" />
            <circle cx="11" cy="11" r="5.200" fill="#fff" /><circle cx="11" cy="11" r="4.200" fill="#4a8af4" />
          </Svg>
        </TaskButton>
        <TaskButton>
          <div className="flex h-6 w-6 flex-col items-center bg-[linear-gradient(135deg,#f5fafd,#a9cbe6)]">
            <span className="text-[20px] font-extrabold leading-[18px] text-[#1f5fa4]">R</span>
            <Fit w={12} text="PHOTO" className="self-end text-[5px] font-extrabold leading-[6px] text-[#163f7a]" />
          </div>
        </TaskButton>
        <TaskButton>
          <div className="relative">
            <Svg w={22} h={22}><rect y="1" width="19.500" height="18" rx="4" fill="#6d83cf" /><path d="M4 14Q3.500 8 6 6.500Q10 5.500 13.500 6.500Q16 8 15.500 14L13 15L12 13.500H7.500L6.500 15Z" fill="#fff" /><circle cx="7.500" cy="10.500" r="1.400" fill="#6d83cf" /><circle cx="12" cy="10.500" r="1.400" fill="#6d83cf" /></Svg>
            <div className="absolute left-[10px] top-[10px] flex h-[13px] w-[13px] items-center justify-center rounded-full bg-[#ee4346]"><div className="h-[5px] w-[5px] rounded-full bg-white" /></div>
          </div>
        </TaskButton>
        <TaskButton>
          <div className="flex h-6 w-6 flex-col items-center bg-[linear-gradient(135deg,#fdf4ea,#f7cfa2)]">
            <span className="text-[20px] font-extrabold leading-[18px] text-[#c06d1e]">F</span>
            <Fit w={8} text="360" className="mr-[3px] self-end text-[5px] font-extrabold leading-[6px] text-[#ef9540]" />
          </div>
        </TaskButton>
      </div>
      <div className="ml-auto flex h-10 items-center">
        <div className="flex h-5 w-[49px] items-center justify-center border-2 border-white bg-[linear-gradient(90deg,#169c46_57%,#000_57%)]">
          <Fit w={27} text="56%" className="text-[13px]" />
        </div>
        <div className="h-2 w-[2px] bg-white" />
        <Svg w={7} h={14} className="ml-[7px]"><path d="M4 0V5L7 8L4 14L0 9L2 4Z" fill="#fff" /></Svg>
        <Svg w={12} h={7} className="ml-[12px]"><path d="M.6 6.500L6 1L11.400 6.500" stroke="#fff" strokeWidth="1.200" /></Svg>
        <Svg w={17} h={12} className="ml-[10px]"><path d="M1 1.500H5V5H1ZM3 5V9H5M6 2.500H14.500V10.500H4.500M15 5H16.500V8H15" stroke="#fff" /><rect x="6" y="4" width="3" height="5" fill="#fff" /></Svg>
        <Svg w={14} h={13} className="ml-[10px]"><path d="M1 12.500Q1.500 2 13 1M4 12.500Q4.500 5 13 4M7 12.500Q7.500 8 13 7" stroke="#aab2b6" strokeWidth="1.100" /><circle cx="11" cy="11" r="1.800" fill="#fff" /></Svg>
        <div className="ml-[7px] h-4 w-4 border border-[#76b900] bg-[#111] p-px">
          <Svg w={12} h={12}>
            {[0, 2, 4, 6, 8, 10].map((y, r) => (
              <path key={y} d={`M0 ${y + 1}H12`} strokeWidth="1.300" strokeDasharray="1.500 .6" stroke={['#e08a9c', '#e0a06c', '#c86cc8', '#d878a8', '#d8b850', '#7cd050'][r]} />
            ))}
          </Svg>
        </div>
        <Svg w={17} h={14} className="ml-[8px]"><path d="M.6 4.500H3L6 1.500V12.500L3 9.500H.6Z" stroke="#fff" /><path d="M8.500 5Q10 7 8.500 9M10.500 3.500Q13 7 10.500 10.500" stroke="#fff" /><path d="M13 1.500Q17 7 13 12.500" stroke="#8a9499" /></Svg>
        <div className="ml-[9px] flex w-[24px] flex-col items-center text-[12px] leading-[18px]">
          <Fit w={19} text="ESP" /><Fit w={22} text="LAA" />
        </div>
        <div className="ml-[12px] flex w-[58px] flex-col items-center text-[12px] leading-[18px]">
          <Fit w={27} text="22:45" /><Fit w={58} text="21-04-2021" />
        </div>
        <Svg w={17} h={17} className="ml-[18px]"><path d="M0 0H16V12H8L5 15V12H0Z" fill="#fff" /><path d="M3 3.500H13M3 6.500H13M3 9.500H9" stroke="#2c3c42" /><circle cx="12.500" cy="12" r="3.800" fill="#2c3c42" /><circle cx="12.500" cy="12" r="2.800" stroke="#fff" /><path d="M11 14L14.500 10" stroke="#fff" /></Svg>
        <div className="ml-[19px] mr-1 h-10 w-px bg-[#7c868a]" />
      </div>
    </div>
  );
}

export default function App() {
  return (
    <div className="flex h-[1080px] w-[1920px] flex-col overflow-hidden bg-[#333]">
      <TitleBar />
      <TabBar />
      <Ribbon />
      <div className="relative h-[853px] shrink-0 bg-[#333]">
        <SectionView />
        <Browser />
        <ViewCube />
        <Comments />
        <NavBar />
      </div>
      <Timeline />
      <Taskbar />
    </div>
  );
}
